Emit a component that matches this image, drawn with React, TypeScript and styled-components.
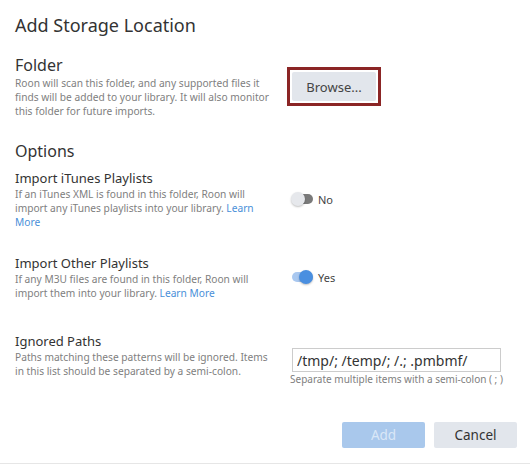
import styled, { createGlobalStyle } from 'styled-components';

const GlobalStyle = createGlobalStyle`
    body {
        margin: 0;
        background: #ffffff;
        font-family: 'Noto Sans', 'Open Sans', sans-serif;
        color: #333333;
    }
`;

type ToggleProps = {
    on: boolean;
    label: string;
};

const Toggle = ({ on, label }: ToggleProps) => (
    <ToggleWrapper>
        <Track on={on}>
            <Knob on={on} />
        </Track>
        <ToggleLabel>{label}</ToggleLabel>
    </ToggleWrapper>
);

const App = () => {
    return (
        <>
            <GlobalStyle />
            <Dialog>
                <Title>Add Storage Location</Title>

                <Row spacing={18}>
                    <div>
                        <SectionHeading>Folder</SectionHeading>
                        <Description>
                            Roon will scan this folder, and any supported files it
                            finds will be added to your library. It will also monitor
                            this folder for future imports.
                        </Description>
                    </div>
                    <Highlight>
                        <GreyButton>Browse...</GreyButton>
                    </Highlight>
                </Row>

                <OptionsHeading>Options</OptionsHeading>

                <Row>
                    <div>
                        <OptionTitle>Import iTunes Playlists</OptionTitle>
                        <Description>
                            If an iTunes XML is found in this folder, Roon will
                            import any iTunes playlists into your library.{' '}
                            <Link>Learn More</Link>
                        </Description>
                    </div>
                    <Toggle on={false} label='No' />
                </Row>

                <Row spacing={25}>
                    <div>
                        <OptionTitle>Import Other Playlists</OptionTitle>
                        <Description>
                            If any M3U files are found in this folder, Roon will
                            import them into your library. <Link>Learn More</Link>
                        </Description>
                    </div>
                    <Toggle on={true} label='Yes' />
                </Row>

                <Row spacing={32} top>
                    <div>
                        <OptionTitle>Ignored Paths</OptionTitle>
                        <Description>
                            Paths matching these patterns will be ignored. Items
                            in this list should be separated by a semi-colon.
                        </Description>
                    </div>
                    <InputWrapper>
                        <PathInput defaultValue='/tmp/; /temp/; /.; .pmbmf/' />
                        <Helper>Separate multiple items with a semi-colon ( ; )</Helper>
                    </InputWrapper>
                </Row>

                <Footer>
                    <PrimaryButton disabled>Add</PrimaryButton>
                    <FooterButton>Cancel</FooterButton>
                </Footer>
            </Dialog>
        </>
    );
};

export default App;

const Dialog = styled.div`
    box-sizing: border-box;
    height: 464px;
    padding: 13px 13px 0 15px;
    border-bottom: 1px solid #e6e6e6;
    display: flex;
    flex-direction: column;
`;

const Title = styled.h1`
    margin: 0;
    font-size: 18px;
    line-height: 24px;
    font-weight: 400;
    color: #333333;
`;

const Row = styled.div<{ spacing?: number; top?: boolean }>`
    display: grid;
    grid-template-columns: 262px 1fr;
    column-gap: 13px;
    align-items: ${({ top }) => (top ? 'start' : 'center')};
    margin-top: ${({ spacing }) => spacing ?? 0}px;
`;

const SectionHeading = styled.h2`
    margin: 0;
    font-size: 16px;
    line-height: 21px;
    font-weight: 400;
    color: #333333;
`;

const OptionsHeading = styled(SectionHeading)`
    margin-top: 23px;
    margin-bottom: 7px;
`;

const OptionTitle = styled.h3`
    margin: 0;
    font-size: 13px;
    line-height: 18px;
    font-weight: 400;
    color: #333333;
`;

const Description = styled.p`
    margin: 0;
    font-size: 10.2px;
    line-height: 14px;
    color: #808080;
`;

const Link = styled.span`
    color: #4a90d9;
`;

const Highlight = styled.div`
    justify-self: start;
    margin-left: -3px;
    padding: 2px;
    border: 3px solid #8b2525;
`;

const GreyButton = styled.button`
    display: block;
    width: 84px;
    height: 29px;
    border: none;
    border-radius: 2px;
    background: #e2e6ec;
    color: #444444;
    font-family: 'Noto Sans', sans-serif;
    font-size: 13px;
    padding: 0;
`;

const ToggleWrapper = styled.div`
    display: flex;
    align-items: center;
    gap: 5px;
    margin-left: 2px;
`;

const Track = styled.div<{ on: boolean }>`
    position: relative;
    width: 21px;
    height: 10px;
    border-radius: 5px;
    background: ${({ on }) => (on ? '#a9c8f0' : '#7a7a7a')};
`;

const Knob = styled.div<{ on: boolean }>`
    position: absolute;
    top: -2px;
    left: ${({ on }) => (on ? '7px' : '-1px')};
    width: 14px;
    height: 14px;
    border-radius: 50%;
    background: ${({ on }) => (on ? '#4a8fe0' : '#e6e8ec')};
    box-shadow: 0 1px 2px rgba(0, 0, 0, 0.25);
`;

const ToggleLabel = styled.span`
    font-size: 11px;
    color: #444444;
`;

const InputWrapper = styled.div`
    padding-top: 16px;
    margin-left: 2px;
`;

const PathInput = styled.input`
    box-sizing: border-box;
    display: block;
    width: 209px;
    height: 24px;
    padding: 0 4px;
    border: 1px solid #cccccc;
    font-family: 'Noto Sans', sans-serif;
    font-size: 14px;
    color: #333333;
    outline: none;
`;

const Helper = styled.div`
    margin-left: -2px;
    font-size: 10px;
    line-height: 15px;
    color: #808080;
`;

const Footer = styled.div`
    display: flex;
    justify-content: flex-end;
    gap: 9px;
    margin-top: 35px;
`;

const FooterButton = styled.button`
    width: 83px;
    height: 26px;
    border: none;
    border-radius: 2px;
    background: #e2e6ec;
    color: #333333;
    font-family: 'Noto Sans', sans-serif;
    font-size: 13.5px;
    padding: 0;
`;

const PrimaryButton = styled(FooterButton)`
    background: #a9c8ec;
    color: #d9e7f7;
`;
